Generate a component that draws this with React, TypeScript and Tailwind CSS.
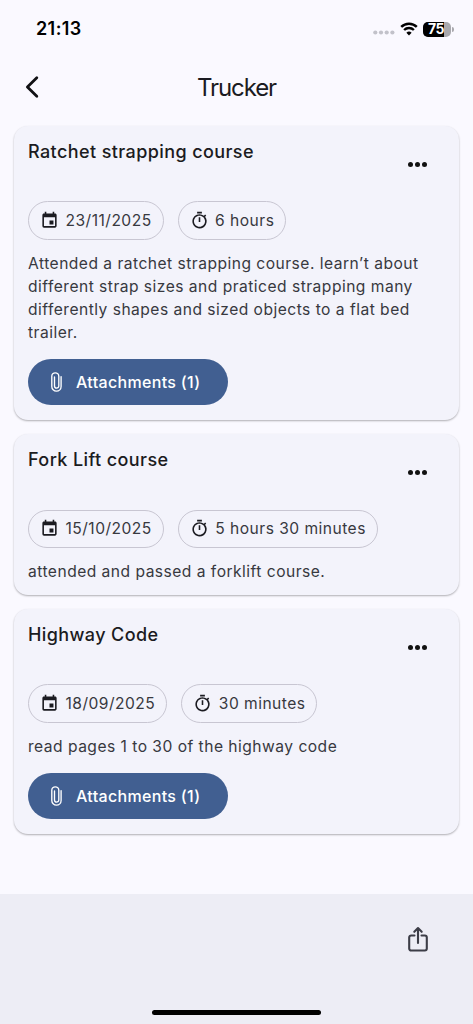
import type { ReactNode } from "react";

type Entry = {
  title: string;
  date: string;
  duration: string;
  notes: string[];
  attachments: number;
};

const entries: Entry[] = [
  {
    title: "Ratchet strapping course",
    date: "23/11/2025",
    duration: "6 hours",
    notes: [
      "Attended a ratchet strapping course. learn’t about",
      "different strap sizes and praticed strapping many",
      "differently shapes and sized objects to a flat bed",
      "trailer.",
    ],
    attachments: 1,
  },
  {
    title: "Fork Lift course",
    date: "15/10/2025",
    duration: "5 hours 30 minutes",
    notes: ["attended and passed a forklift course."],
    attachments: 0,
  },
  {
    title: "Highway Code",
    date: "18/09/2025",
    duration: "30 minutes",
    notes: ["read pages 1 to 30 of the highway code"],
    attachments: 1,
  },
];

function CalendarIcon() {
  return (
    <svg className="size-[19px] shrink-0" viewBox="0 0 24 24" fill="#1b1b21" aria-hidden="true">
      <path d="M17 12h-5v5h5v-5zM16 1v2H8V1H6v2H5c-1.11 0-1.99.9-1.99 2L3 19a2 2 0 0 0 2 2h14c1.1 0 2-.9 2-2V5c0-1.1-.9-2-2-2h-1V1h-2zm3 18H5V8h14v11z" />
    </svg>
  );
}

function TimerIcon() {
  return (
    <svg className="size-[19px] shrink-0" viewBox="0 0 24 24" fill="#1b1b21" aria-hidden="true">
      <path d="M15 1H9v2h6V1zm-4 13h2V8h-2v6zm8.03-6.61 1.42-1.42c-.43-.51-.9-.99-1.41-1.41l-1.42 1.42A8.962 8.962 0 0 0 12 4c-4.97 0-9 4.03-9 9s4.02 9 9 9a8.994 8.994 0 0 0 7.03-14.61zM12 20c-3.87 0-7-3.13-7-7s3.13-7 7-7 7 3.13 7 7-3.13 7-7 7z" />
    </svg>
  );
}

function PaperclipIcon() {
  return (
    <svg width="11" height="20" viewBox="0 0 11 20" fill="none" aria-hidden="true">
      <path
        d="M10.1 4.6v9.8a4.65 4.65 0 0 1-9.3 0V4.3a3.5 3.5 0 0 1 7 0v9.6a2.15 2.15 0 0 1-4.3 0V5"
        stroke="#fff"
        strokeWidth="1.35"
        strokeLinecap="round"
      />
    </svg>
  );
}

function StatusBar() {
  return (
    <div className="flex h-[58px] items-center justify-between pl-[36px] pr-[19px]">
      <span className="text-[18px] leading-none font-semibold tracking-[0.4px] text-black">21:13</span>
      <div className="flex items-center">
        <svg className="mt-[7px]" width="22" height="5" viewBox="0 0 22 5" fill="#c2c2ca" aria-hidden="true">
          <circle cx="2.3" cy="2.5" r="2.1" />
          <circle cx="8" cy="2.5" r="2.1" />
          <circle cx="13.7" cy="2.5" r="2.1" />
          <circle cx="19.4" cy="2.5" r="2.1" />
        </svg>
        <svg className="ml-[5px]" width="18" height="14" viewBox="0 0 18 14" fill="none" stroke="#000" aria-hidden="true">
          <path d="M1.2 4.8a11.2 11.2 0 0 1 15.6 0" strokeWidth="2.5" />
          <path d="M4.1 8a7 7 0 0 1 9.8 0" strokeWidth="2.4" />
          <path d="M9 13.4 6.4 10.8a3.7 3.7 0 0 1 5.2 0z" fill="#000" stroke="none" />
        </svg>
        <div className="relative ml-[5px] flex h-[15px] w-[28px] items-center justify-center overflow-hidden rounded-[5px] bg-[#a9a9ae]">
          <div className="absolute inset-y-0 left-0 w-[21px] bg-black" />
          <span className="relative right-[1px] text-[14px] leading-none font-bold tracking-[-0.6px] text-white">75</span>
        </div>
        <div className="ml-[1px] h-[5px] w-[2px] rounded-r-full bg-[#a9a9ae]" />
      </div>
    </div>
  );
}

function Chip({ icon, children }: { icon: ReactNode; children: ReactNode }) {
  return (
    <div className="flex h-[38.7px] items-center gap-[6.5px] rounded-full border border-[#c8c6d2] pr-[11px] pl-[11px] text-[15.6px] tracking-[0.47px] whitespace-nowrap text-[#38393f]">
      {icon}
      <span>{children}</span>
    </div>
  );
}

function EntryCard({ entry }: { entry: Entry }) {
  return (
    <section className="rounded-[14px] bg-[#f3f3fb] px-[14px] pb-[11px] shadow-[0_1px_2px_rgba(0,0,0,0.3)]">
      <div className="flex h-[75.2px] items-start justify-between">
        <h2 className="pt-[14px] text-[18px] leading-[24px] font-[450] tracking-[0.4px] text-[#1b1b21]">
          {entry.title}
        </h2>
        <button className="mt-[36px] mr-[18px] flex gap-[1.8px]" aria-label="More options">
          <span className="size-[5px] rounded-full bg-[#111]" />
          <span className="size-[5px] rounded-full bg-[#111]" />
          <span className="size-[5px] rounded-full bg-[#111]" />
        </button>
      </div>

      <div className="flex gap-[14px]">
        <Chip icon={<CalendarIcon />}>{entry.date}</Chip>
        <Chip icon={<TimerIcon />}>{entry.duration}</Chip>
      </div>

      <p className="mt-[12.8px] text-[15.6px] leading-[22.9px] tracking-[0.48px] text-[#38393f]">
        {entry.notes.map((line) => (
          <span key={line} className="block whitespace-nowrap">
            {line}
          </span>
        ))}
      </p>

      {entry.attachments > 0 && (
        <button className="mt-[14.8px] mb-[4.5px] flex h-[45.7px] w-[200px] items-center gap-[14px] rounded-full bg-[#415f91] pl-[23px] text-[16px] font-[450] tracking-[0.33px] text-white">
          <PaperclipIcon />
          Attachments ({entry.attachments})
        </button>
      )}
    </section>
  );
}

export default function App() {
  return (
    <div className="flex h-[1024px] w-[473px] flex-col overflow-hidden bg-[#faf9ff] font-['Inter',sans-serif]">
      <StatusBar />

      <header className="grid h-[68.2px] grid-cols-3 items-center pb-[10px]">
        <button className="pl-[24px]" aria-label="Back">
          <svg width="16" height="24" viewBox="0 0 16 24" fill="none" aria-hidden="true">
            <path
              d="M12.8 2.8 3.4 12 12.8 21.2"
              stroke="#111114"
              strokeWidth="2.8"
              strokeLinecap="round"
              strokeLinejoin="round"
            />
          </svg>
        </button>
        <h1 className="pt-[2px] text-center text-[24px] leading-none tracking-[-1.1px] text-[#1b1b21]">Trucker</h1>
      </header>

      <main className="flex flex-1 flex-col gap-[13.9px] px-[14px]">
        {entries.map((entry) => (
          <EntryCard key={entry.title} entry={entry} />
        ))}
      </main>

      <footer className="flex h-[130px] flex-col items-end justify-between bg-[#ededf5] pt-[32px] pr-[44px] pb-[9.5px]">
        <button aria-label="Share">
          <svg width="22" height="27" viewBox="0 0 22 27" fill="none" stroke="#3c3d47" strokeWidth="2.1" aria-hidden="true">
            <path d="M7.5 9.5H4.2A2 2 0 0 0 2.2 11.5V22.5a2 2 0 0 0 2 2h13.6a2 2 0 0 0 2-2V11.5a2 2 0 0 0-2-2h-3.3" strokeLinecap="round" />
            <path d="M11 17V2.5M7.3 5.8 11 2.1l3.7 3.7" strokeLinecap="round" strokeLinejoin="round" />
          </svg>
        </button>
        <div className="mr-[108px] h-[5px] w-[169px] rounded-full bg-black" />
      </footer>
    </div>
  );
}
